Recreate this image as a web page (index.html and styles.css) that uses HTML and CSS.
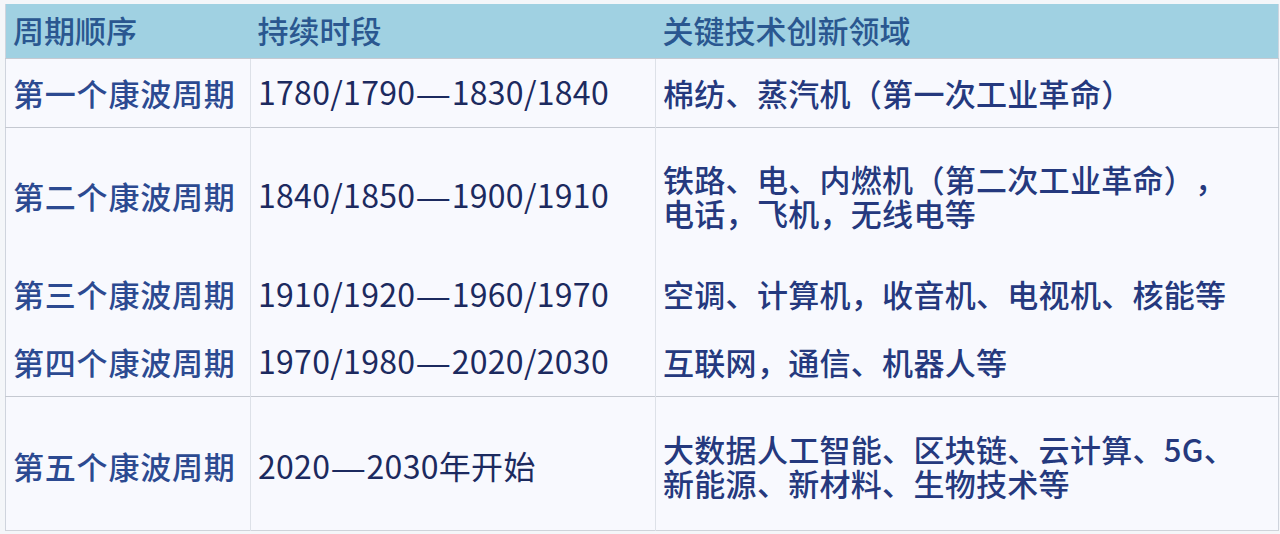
FILE: index.html
```html
<!DOCTYPE html>
<html lang="zh-CN">
<head>
<meta charset="utf-8">
<title>康波周期</title>
<link rel="stylesheet" href="styles.css">
</head>
<body>
<div class="wrap">
<table class="cycles">
  <colgroup>
    <col class="c1">
    <col class="c2">
    <col class="c3">
  </colgroup>
  <thead>
    <tr class="head">
      <th>周期顺序</th>
      <th>持续时段</th>
      <th>关键技术创新领域</th>
    </tr>
  </thead>
  <tbody>
    <tr class="r1 sep">
      <td class="name">第一个康波周期</td>
      <td class="period">1780/1790<span class="dash">—</span>1830/1840</td>
      <td class="tech">棉纺、蒸汽机（第一次工业革命）</td>
    </tr>
    <tr class="r2 sep">
      <td class="name">第二个康波周期</td>
      <td class="period">1840/1850<span class="dash">—</span>1900/1910</td>
      <td class="tech">铁路、电、内燃机（第二次工业革命），<br>电话，飞机，无线电等</td>
    </tr>
    <tr class="r3">
      <td class="name">第三个康波周期</td>
      <td class="period">1910/1920<span class="dash">—</span>1960/1970</td>
      <td class="tech">空调、计算机，收音机、电视机、核能等</td>
    </tr>
    <tr class="r4">
      <td class="name">第四个康波周期</td>
      <td class="period">1970/1980<span class="dash">—</span>2020/2030</td>
      <td class="tech">互联网，通信、机器人等</td>
    </tr>
    <tr class="r5 sep">
      <td class="name">第五个康波周期</td>
      <td class="period">2020<span class="dash">—</span>2030年开始</td>
      <td class="tech">大数据人工智能、区块链、云计算、5G、<br>新能源、新材料、生物技术等</td>
    </tr>
  </tbody>
</table>
</div>
</body>
</html>
```
FILE: styles.css
```css
html, body {
  margin: 0;
  padding: 0;
  background: #eceef2;
}

.wrap {
  padding: 4px 2px 0 5px;
  background: #f4f6f9;
  height: 534px;
  box-sizing: border-box;
}

.cycles {
  width: 1273px;
  border-collapse: collapse;
  table-layout: fixed;
  background: #f8f9fe;
  font-family: "Noto Sans CJK SC", "Noto Sans", sans-serif;
  font-size: 31px;
  line-height: 34px;
  font-weight: 500;
  text-spacing-trim: space-all;
  border-left: 1px solid #cfd4dd;
  border-right: 1px solid #cfd4dd;
  border-bottom: 1px solid #cfd3da;
}

.c1 { width: 245px; }
.c2 { width: 405px; }
.c3 { width: 623px; }

.head th {
  height: 54px;
  padding: 0 0 2px 7px;
  background: #a0d1e2;
  color: #2a5790;
  font-weight: 500;
  text-align: left;
  vertical-align: middle;
  box-sizing: border-box;
}

td {
  padding: 0 0 0 7px;
  vertical-align: middle;
  text-align: left;
  white-space: nowrap;
  border-left: 1px solid #dde1e8;
  box-sizing: border-box;
}

td:first-child {
  border-left: none;
}

.sep td {
  border-top: 1px solid #c5c9d1;
}

.name {
  color: #2c4a91;
  letter-spacing: 0.8px;
}

.period {
  color: #1c2a5f;
  font-size: 32px;
  font-weight: 400;
  letter-spacing: 0.3px;
}

.dash {
  font-family: "Liberation Sans", sans-serif;
  margin: 0 2px;
}

.tech {
  color: #25397e;
  letter-spacing: 0.3px;
}

.r1 td { height: 69px; }
.r2 td { height: 135px; padding-top: 2px; }
.r3 td { height: 66px; padding-bottom: 2px; }
.r4 td { height: 68px; }
.r5 td { height: 134px; padding-top: 6px; }
```
